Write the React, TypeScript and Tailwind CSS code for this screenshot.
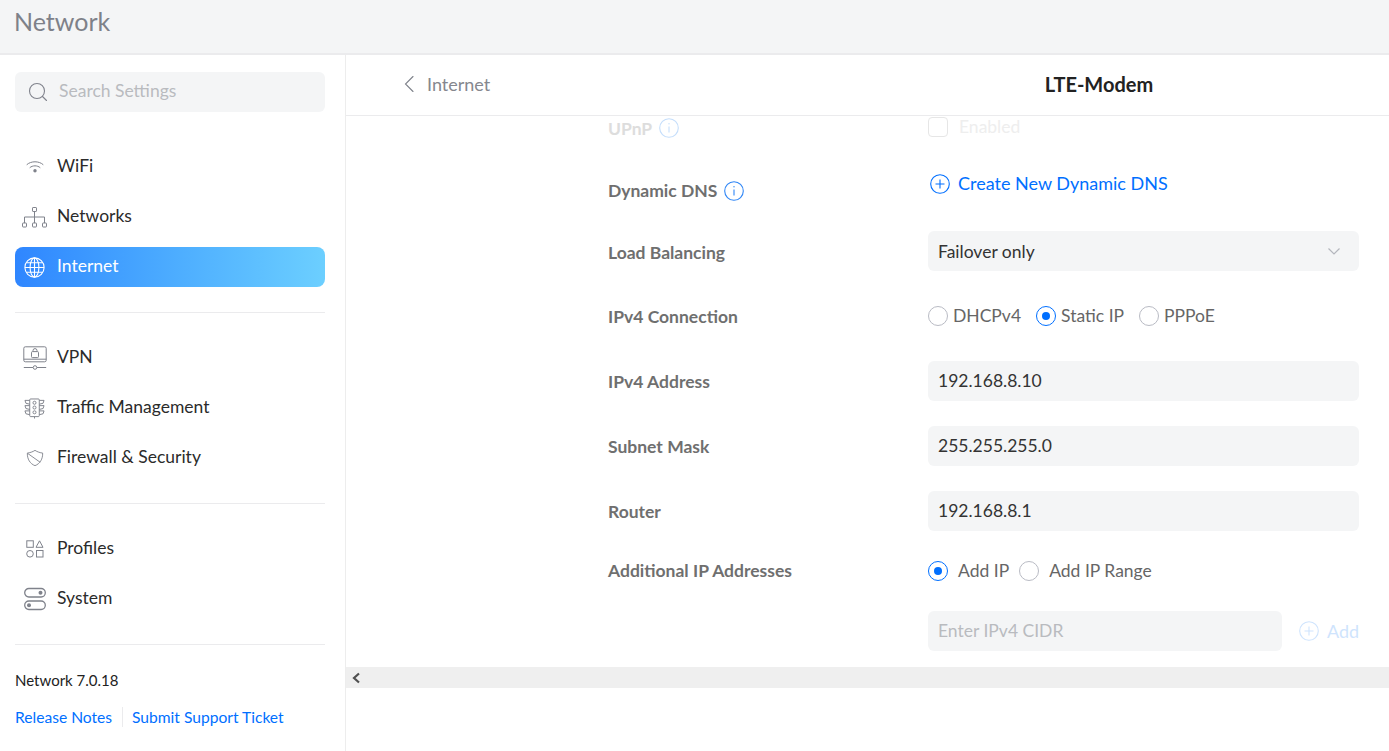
import React from "react";

const Wifi = () => (
  <svg width="18" height="14" viewBox="0 0 18 14" fill="none" stroke="#7f828b" strokeWidth="1" strokeLinecap="round">
    <path d="M1 4.500C5 .8 13 .8 17 4.500" />
    <path d="M4 7.500C6.500 5.200 11.500 5.200 14 7.500" />
    <circle cx="9" cy="10.800" r="1.700" fill="#7f828b" stroke="none" />
  </svg>
);
const Networks = () => (
  <svg width="25" height="21" viewBox="0 0 25 21" fill="none" stroke="#7f828b" strokeWidth="1">
    <rect x="10.500" y=".5" width="4" height="4" rx=".6" />
    <path d="M12.500 4.500V10M2.500 16V10H22.500V16M12.500 10V16" />
    <rect x=".5" y="16" width="4" height="4" rx=".6" />
    <rect x="10.500" y="16" width="4" height="4" rx=".6" />
    <rect x="20.500" y="16" width="4" height="4" rx=".6" />
  </svg>
);
const Globe = () => (
  <svg width="21" height="21" viewBox="0 0 21 21" fill="none" stroke="#fff" strokeWidth="1.100">
    <circle cx="10.500" cy="10.500" r="9.600" />
    <ellipse cx="10.500" cy="10.500" rx="4.400" ry="9.600" />
    <path d="M10.500 1V20M1 10.500H20M2.400 5.800H18.600M2.400 15.200H18.600" />
  </svg>
);
const Vpn = () => (
  <svg width="24" height="24" viewBox="0 0 24 24" fill="none" stroke="#7f828b" strokeWidth="1">
    <rect x=".8" y=".8" width="22.400" height="15" rx="1.500" />
    <path d="M.8 13.200H23.200" />
    <rect x="8.500" y="5.600" width="7" height="6" rx="1" />
    <path d="M10 5.600V4.600a2 2 0 0 1 4 0v1" />
    <path d="M.8 21.500H10M14 21.500H23.200" />
    <circle cx="12" cy="21.500" r="1.800" />
  </svg>
);
const Traffic = () => (
  <svg width="21" height="21" viewBox="0 0 22 22" fill="none" stroke="#7f828b" strokeWidth="1">
    <rect x="6" y="1" width="10" height="18.500" rx="1" />
    <path d="M11 19.500V21.500" />
    <circle cx="11" cy="5" r="1.600" />
    <circle cx="11" cy="10" r="1.600" />
    <circle cx="11" cy="15" r="1.600" />
    <path d="M6 2.500H1L2 5.500 6 6.500M6 8H1L2 11 6 12M6 13.500H1L2 16.500 6 17.500M16 2.500H21L20 5.500 16 6.500M16 8H21L20 11 16 12M16 13.500H21L20 16.500 16 17.500" />
  </svg>
);
const Shield = () => (
  <svg width="18" height="18" viewBox="0 0 20 20" fill="none" stroke="#7f828b" strokeWidth="1">
    <path d="M1.500 4.500C4 4.300 7.500 3.200 10 1.500C12.500 3.200 16 4.300 18.500 4.500C18.800 11 15.500 16.500 10 18.500C4.500 16.500 1.200 11 1.500 4.500Z" />
    <path d="M2 5L15.800 14.800" />
  </svg>
);
const Profiles = () => (
  <svg width="18" height="18" viewBox="0 0 18 18" fill="none" stroke="#7f828b" strokeWidth="1">
    <rect x=".8" y=".8" width="6.500" height="6.500" />
    <path d="M13.500 .8L17 7.300H10Z" />
    <circle cx="4" cy="13.800" r="3.300" />
    <rect x="10.500" y="10.500" width="6.500" height="6.500" />
  </svg>
);
const SystemIcon = () => (
  <svg width="24" height="24" viewBox="0 0 24 24" fill="none" stroke="#7f828b" strokeWidth="1.300">
    <rect x="1.700" y="1.500" width="20.600" height="8.500" rx="4.200" />
    <rect x="1.700" y="14" width="20.600" height="8.500" rx="4.200" />
    <circle cx="17.500" cy="5.700" r="2" fill="#7f828b" stroke="none" />
    <circle cx="6" cy="18.200" r="2" fill="#7f828b" stroke="none" />
  </svg>
);
const Search = () => (
  <svg width="20" height="20" viewBox="0 0 20 20" fill="none" stroke="#80838c" strokeWidth="1.100" strokeLinecap="round">
    <circle cx="9" cy="9" r="7.500" />
    <path d="M14.500 14.500L18.500 18.500" />
  </svg>
);
const Info = ({ muted }: { muted?: boolean }) => (
  <svg width="20" height="20" viewBox="0 0 20 20" fill="none" stroke={muted ? "#c5defb" : "#2f86f6"} strokeWidth="1.100">
    <circle cx="10" cy="10" r="9.300" />
    <path d="M10 8.500V14.500" />
    <circle cx="10" cy="5.800" r=".7" fill={muted ? "#c5defb" : "#2f86f6"} stroke="none" />
  </svg>
);
const Plus = ({ muted }: { muted?: boolean }) => (
  <svg width="20" height="20" viewBox="0 0 20 20" fill="none" stroke={muted ? "#cfe4fd" : "#006fff"} strokeWidth="1.100">
    <circle cx="10" cy="10" r="9.300" />
    <path d="M10 5.500V14.500M5.500 10H14.500" />
  </svg>
);

const Radio = ({ on }: { on?: boolean }) =>
  on ? (
    <span className="flex h-5 w-5 shrink-0 items-center justify-center rounded-full border border-[#006fff]">
      <span className="h-2 w-2 rounded-full bg-[#006fff]" />
    </span>
  ) : (
    <span className="block h-5 w-5 shrink-0 rounded-full border border-[#b9bbc4]" />
  );

const NavItem = ({ icon, label, active }: { icon: React.ReactNode; label: string; active?: boolean }) => (
  <div
    className={
      active
        ? "flex h-10 items-center rounded-lg bg-gradient-to-r from-[#2f86ff] to-[#6ccfff] text-white"
        : "flex h-10 items-center rounded-lg text-[#2b2b2b]"
    }
  >
    <span className="flex w-[42px] shrink-0 items-center justify-center pr-[3px]">{icon}</span>
    <span className="pb-[3px] text-[17.500px] leading-none">{label}</span>
  </div>
);

const Label = ({ children, cls }: { children: React.ReactNode; cls?: string }) => (
  <div className={"w-[320px] shrink-0 text-[17.500px] font-bold leading-none text-[#6f6f6f] " + (cls ?? "")}>{children}</div>
);

const Field = ({ value }: { value: string }) => (
  <div className="flex h-10 w-[431px] items-center rounded-md bg-[#f4f5f6] px-[10px] text-[17.500px] text-[#333333]">{value}</div>
);

const Row = ({ label, children, cls }: { label: string; children: React.ReactNode; cls?: string }) => (
  <div className="mb-[25px] flex h-10 items-center">
    <Label cls={cls}>{label}</Label>
    {children}
  </div>
);

export default function App() {
  return (
    <div className="flex h-[751px] w-[1389px] flex-col overflow-hidden bg-white font-['Lato','Noto_Sans',sans-serif] [text-rendering:optimizeLegibility]">
      <header className="flex h-[55px] shrink-0 items-center border-b-2 border-[#ebebed] bg-[#f4f5f6] pb-[10px] pl-[14px] text-[25px] leading-none text-[#7e8189]">
        Network
      </header>
      <div className="flex min-h-0 flex-1">
        <aside className="flex w-[346px] shrink-0 flex-col border-r border-[#ededed] pl-[15px] pr-[20px] pt-[17px]">
          <div className="flex h-10 w-[310px] items-center rounded-md bg-[#f4f5f6] pl-[13px] text-[17.500px] text-[#b9bbbf]">
            <Search />
            <span className="ml-[11px] pb-[2px]">Search Settings</span>
          </div>
          <nav className="mt-[35px] flex flex-col gap-[10px]">
            <NavItem icon={<Wifi />} label="WiFi" />
            <NavItem icon={<Networks />} label="Networks" />
            <NavItem icon={<Globe />} label="Internet" active />
          </nav>
          <hr className="my-[25px] border-[#ebebed]" />
          <nav className="flex flex-col gap-[10px]">
            <NavItem icon={<Vpn />} label="VPN" />
            <NavItem icon={<Traffic />} label="Traffic Management" />
            <NavItem icon={<Shield />} label="Firewall & Security" />
          </nav>
          <hr className="mb-[25px] mt-[25px] border-[#ebebed]" />
          <nav className="flex flex-col gap-[10px]">
            <NavItem icon={<Profiles />} label="Profiles" />
            <NavItem icon={<SystemIcon />} label="System" />
          </nav>
          <hr className="mt-[25px] border-[#ebebed]" />
          <div className="mt-[26px] text-[15px] leading-[18px] text-[#222222]">Network 7.0.18</div>
          <div className="mt-[18px] flex items-center text-[15.600px] leading-5 text-[#006fff]">
            <span>Release Notes</span>
            <span className="ml-[10px] mr-[9px] h-5 w-px bg-[#ebebed]" />
            <span>Submit Support Ticket</span>
          </div>
        </aside>
        <main className="flex min-w-0 flex-1 flex-col">
          <div className="flex h-[61px] shrink-0 items-center border-b border-[#ebebed] pb-[2px]">
            <div className="flex w-[200px] shrink-0 items-center pl-[55px] text-[18px] text-[#85878e]">
              <svg width="16" height="20" viewBox="0 0 16 20" fill="none" stroke="#7f828b" strokeWidth="1.100" strokeLinecap="round">
                <path d="M12 2.500L4.500 10L12 17.500" />
              </svg>
              <span className="ml-[10px]">Internet</span>
            </div>
            <div className="flex-1 pl-[263px] text-center text-[20px] font-bold leading-none text-[#222222]">LTE-Modem</div>
          </div>
          <div className="h-[551px] shrink-0 overflow-hidden pl-[262px]">
            <div className="flex h-[50px]">
              <Label cls="flex h-6 items-center gap-[7px] text-[#dddddd]">
                <span className="pt-[1px]">UPnP</span>
                <Info muted />
              </Label>
              <div className="flex h-[21px] items-center gap-[11px] text-[17.500px] text-[#eeeeee]">
                <span className="h-5 w-5 shrink-0 rounded-[4px] border border-[#e6e6e6]" />
                <span className="pt-[1px]">Enabled</span>
              </div>
            </div>
            <div className="mb-[25px] flex h-10">
              <Label cls="flex h-[50px] items-center gap-[7px]">
                <span>Dynamic DNS</span>
                <Info />
              </Label>
              <div className="flex h-[35px] items-center gap-2 pl-[2px] text-[18px] text-[#006fff]">
                <Plus />
                <span>Create New Dynamic DNS</span>
              </div>
            </div>
            <Row label="Load Balancing" cls="pt-[4px]">
              <div className="flex h-10 w-[431px] items-center justify-between rounded-md bg-[#f4f5f6] px-[10px] text-[17.500px] text-[#333333]">
                <span className="pt-[2px]">Failover only</span>
                <svg width="14" height="10" viewBox="0 0 14 10" fill="none" stroke="#b4b6bd" strokeWidth="1.200" className="mr-[8px]">
                  <path d="M1.500 2.500L7 8L12.500 2.500" />
                </svg>
              </div>
            </Row>
            <Row label="IPv4 Connection" cls="pt-[1px]">
              <div className="flex items-center text-[17.500px] text-[#666666]">
                <Radio />
                <span className="ml-[5px]">DHCPv4</span>
                <span className="ml-[15px]"><Radio on /></span>
                <span className="ml-[5px]">Static IP</span>
                <span className="ml-[15px]"><Radio /></span>
                <span className="ml-[5px]">PPPoE</span>
              </div>
            </Row>
            <Row label="IPv4 Address" cls="pt-[1px]"><Field value="192.168.8.10" /></Row>
            <Row label="Subnet Mask" cls="pt-[1px]"><Field value="255.255.255.0" /></Row>
            <Row label="Router" cls="pt-[1px]"><Field value="192.168.8.1" /></Row>
            <div className="mb-[25px] flex h-[30px] items-center">
              <Label cls="pb-[1px]">Additional IP Addresses</Label>
              <div className="flex items-center text-[17.500px] text-[#666666]">
                <Radio on />
                <span className="ml-[10px]">Add IP</span>
                <span className="ml-[10px]"><Radio /></span>
                <span className="ml-[10px]">Add IP Range</span>
              </div>
            </div>
            <div className="flex h-10">
              <div className="w-[320px] shrink-0" />
              <div className="flex h-10 w-[354px] items-center rounded-md bg-[#f4f5f6] px-[10px] text-[17.500px] text-[#b9bbbf]">Enter IPv4 CIDR</div>
              <div className="ml-[17px] flex items-center gap-[8px] text-[18px] text-[#cfe4fd]">
                <Plus muted />
                <span>Add</span>
              </div>
            </div>
          </div>
          <div className="flex h-[21px] shrink-0 items-center bg-[#efefef] pl-[5px]">
            <svg width="10" height="12" viewBox="0 0 10 12" fill="none" stroke="#505050" strokeWidth="2.200">
              <path d="M8 1.500L3 6L8 10.500" />
            </svg>
          </div>
        </main>
      </div>
    </div>
  );
}
